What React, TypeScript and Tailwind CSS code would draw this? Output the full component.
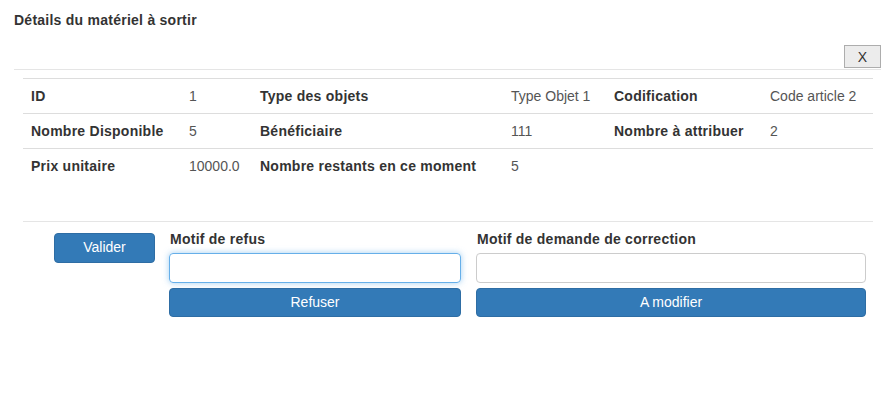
import React from "react";

const rows: { label: string; value: string }[][] = [
  [
    { label: "ID", value: "1" },
    { label: "Type des objets", value: "Type Objet 1" },
    { label: "Codification", value: "Code article 2" },
  ],
  [
    { label: "Nombre Disponible", value: "5" },
    { label: "Bénéficiaire", value: "111" },
    { label: "Nombre à attribuer", value: "2" },
  ],
  [
    { label: "Prix unitaire", value: "10000.0" },
    { label: "Nombre restants en ce moment", value: "5" },
  ],
];

const widths = ["w-[158px]", "w-[71px]", "w-[251px]", "w-[103px]", "w-[156px]", "w-[111px]"];

export default function App() {
  return (
    <div className="w-[896px] h-[409px] bg-white text-[14px] text-[#333] font-['Liberation_Sans',Arial,sans-serif]">
      {/* Header */}
      <div className="ml-[14px] mr-[15px] pt-[10px] pb-[1px] border-b border-[#e5e5e5]">
        <h4 className="font-bold text-[14px] leading-5 tracking-[0.25px]">Détails du matériel à sortir</h4>
        <div className="flex justify-end mt-[15px]">
          <button className="w-[37px] h-[23px] border border-[#adadad] bg-[#ececec] text-[14px] leading-none text-[#333]">
            X
          </button>
        </div>
      </div>

      {/* Table */}
      <div className="ml-[23px] w-[850px] mt-[8px]">
        <table className="w-full table-fixed border-collapse">
          <colgroup>
            {widths.map((w, i) => (
              <col key={i} className={w} />
            ))}
          </colgroup>
          <tbody>
            {rows.map((row, i) => (
              <tr key={i} className="border-t border-[#dddddd] h-[35px]">
                {row.map((c, j) => (
                  <React.Fragment key={j}>
                    <td className="px-[8px] font-bold tracking-[0.25px] leading-5 align-middle whitespace-nowrap">{c.label}</td>
                    <td className="px-[8px] text-[#555] leading-5 align-middle whitespace-nowrap">{c.value}</td>
                  </React.Fragment>
                ))}
                {row.length < 3 && (
                  <>
                    <td />
                    <td />
                  </>
                )}
              </tr>
            ))}
          </tbody>
        </table>
        <div className="mt-[37px] border-t border-[#e5e5e5]" />
      </div>

      {/* Actions */}
      <div className="flex mt-[11px]">
        <div className="ml-[54px] w-[101px]">
          <button className="w-full h-[30px] rounded-[4px] bg-[#337ab7] border border-[#2e6da4] text-white text-[14px]">
            Valider
          </button>
        </div>
        <div className="ml-[14px] w-[292px] flex flex-col">
          <label className="font-bold tracking-[0.25px] leading-5 h-[20px] mt-[-4px] ml-[1px]">Motif de refus</label>
          <input
            className="mt-[4px] h-[30px] w-full rounded-[4px] border border-[#66afe9] outline-none shadow-[0_0_6px_rgba(102,175,233,0.6)] px-3"
            defaultValue=""
          />
          <button className="mt-[5px] h-[29px] w-full rounded-[4px] bg-[#337ab7] border border-[#2e6da4] text-white text-[14px]">
            Refuser
          </button>
        </div>
        <div className="ml-[15px] w-[390px] flex flex-col">
          <label className="font-bold tracking-[0.25px] leading-5 h-[20px] mt-[-4px] ml-[1px]">Motif de demande de correction</label>
          <input
            className="mt-[4px] h-[30px] w-full rounded-[4px] border border-[#cccccc] outline-none px-3"
            defaultValue=""
          />
          <button className="mt-[5px] h-[29px] w-full rounded-[4px] bg-[#337ab7] border border-[#2e6da4] text-white text-[14px]">
            A modifier
          </button>
        </div>
      </div>
    </div>
  );
}
